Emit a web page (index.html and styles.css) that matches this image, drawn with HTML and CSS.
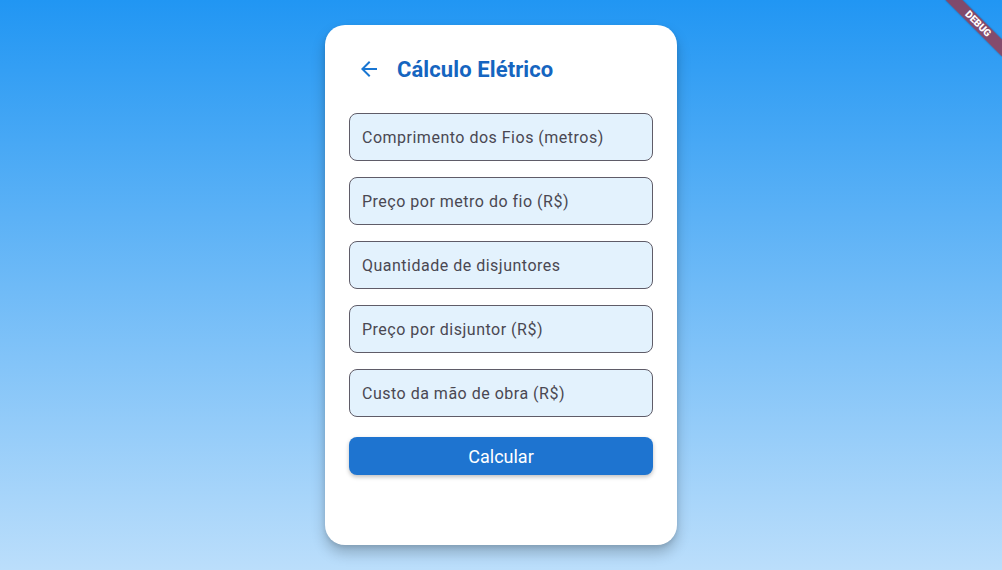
FILE: index.html
```html
<!DOCTYPE html>
<html lang="pt">
<head>
<meta charset="utf-8">
<title>Cálculo Elétrico</title>
<link rel="stylesheet" href="styles.css">
</head>
<body>
<main class="screen">
  <section class="card">
    <header class="card-header">
      <button class="back" aria-label="Voltar">
        <svg width="24" height="24" viewBox="0 0 24 24"><path d="M20 11H7.83l5.59-5.59L12 4l-8 8 8 8 1.41-1.41L7.83 13H20v-2z" fill="#1976D2"/></svg>
      </button>
      <h1 class="title">Cálculo Elétrico</h1>
    </header>
    <form class="form">
      <label class="field"><span class="field-label">Comprimento dos Fios (metros)</span></label>
      <label class="field"><span class="field-label">Preço por metro do fio (R$)</span></label>
      <label class="field"><span class="field-label">Quantidade de disjuntores</span></label>
      <label class="field"><span class="field-label">Preço por disjuntor (R$)</span></label>
      <label class="field"><span class="field-label">Custo da mão de obra (R$)</span></label>
      <button type="button" class="submit">Calcular</button>
    </form>
  </section>
</main>
<div class="debug-banner">DEBUG</div>
</body>
</html>
```
FILE: styles.css
```css
* { box-sizing: border-box; }
html, body { margin: 0; height: 100%; }
body {
  font-family: Roboto, "Noto Sans", sans-serif;
  background: linear-gradient(180deg, #2196F3 0%, #BBDEFB 100%);
  overflow: hidden;
  position: relative;
}
.screen {
  height: 570px;
  display: flex;
  align-items: center;
  justify-content: center;
}
.card {
  width: 352px;
  height: 520px;
  background: #fff;
  border-radius: 20px;
  padding: 24px;
  box-shadow: 0 8px 14px rgba(0, 0, 0, 0.22), 0 2px 4px rgba(0,0,0,0.1);
}
.card-header {
  height: 40px;
  display: flex;
  align-items: center;
  gap: 8px;
}
.back {
  width: 40px;
  height: 40px;
  padding: 0;
  border: 0;
  background: none;
  display: flex;
  align-items: center;
  justify-content: center;
}
.title {
  margin: 0;
  font-size: 22px;
  font-weight: 700;
  color: #1565C0;
  letter-spacing: 0.1px;
}
.form {
  margin-top: 24px;
  display: flex;
  flex-direction: column;
  gap: 16px;
}
.field {
  height: 48px;
  border: 1px solid #5f5c68;
  border-radius: 8px;
  background: #E3F2FD;
  display: flex;
  align-items: center;
  padding-left: 12px;
}
.field-label {
  font-size: 16px;
  color: #4a4852;
  letter-spacing: 0.5px;
}
.submit {
  margin-top: 4px;
  height: 38px;
  border: 0;
  border-radius: 8px;
  background: #1E74D0;
  color: #fff;
  font-family: Roboto, sans-serif;
  font-size: 18px;
  box-shadow: 0 2px 4px rgba(0,0,0,0.25);
}
.debug-banner {
  position: absolute;
  top: 18px;
  right: -16px;
  width: 80px;
  height: 12px;
  background: rgba(183, 28, 28, 0.63);
  color: #fff;
  font-family: Roboto, sans-serif;
  font-size: 10px;
  font-weight: 900;
  line-height: 12px;
  text-align: center;
  transform: rotate(45deg);
  box-shadow: 0 0 2px rgba(0,0,0,0.3);
}
```
